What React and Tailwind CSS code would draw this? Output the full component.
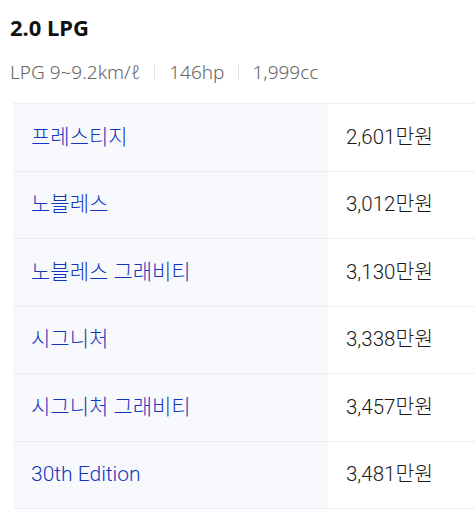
export default function App() {
  const rows = [
    ["프레스티지", "2,601만원"],
    ["노블레스", "3,012만원"],
    ["노블레스 그래비티", "3,130만원"],
    ["시그니처", "3,338만원"],
    ["시그니처 그래비티", "3,457만원"],
    ["30th Edition", "3,481만원"],
  ];
  return (
    <div
      className="w-[475px] h-[511px] bg-white overflow-hidden"
      style={{ fontFamily: '"Noto Sans", "Noto Sans CJK KR", sans-serif' }}
    >
      <div className="pl-[10px] pt-[12px]">
        <h1 className="text-[22px] leading-[30px] font-bold text-[#111]">2.0 LPG</h1>
        <div className="mt-[18px] flex items-center text-[19px] leading-[24px] font-light text-[#666]">
          <span>LPG 9~9.2km/ℓ</span>
          <span className="ml-[14px] mr-[14px] h-[16px] w-px bg-[#e3e5e8]"></span>
          <span>146hp</span>
          <span className="ml-[13px] mr-[14px] h-[16px] w-px bg-[#e3e5e8]"></span>
          <span>1,999cc</span>
        </div>
      </div>
      <div
        className="pl-[13px] mt-[19px]"
        style={{ fontFamily: 'Roboto, "Noto Sans CJK KR", sans-serif' }}
      >
        <div className="border-t border-[#eceef1]">
          {rows.map(([name, price]) => (
            <div key={name} className="flex h-[67.5px] border-b border-[#eceef1]">
              <div className="w-[315px] bg-[#f8f9fc] flex items-center pl-[18px] text-[21px] font-light text-[#1236bf]">
                {name}
              </div>
              <div className="flex-1 flex items-center pl-[18px] text-[20.5px] font-light text-[#1a1a1a]">
                {price}
              </div>
            </div>
          ))}
        </div>
      </div>
    </div>
  );
}
